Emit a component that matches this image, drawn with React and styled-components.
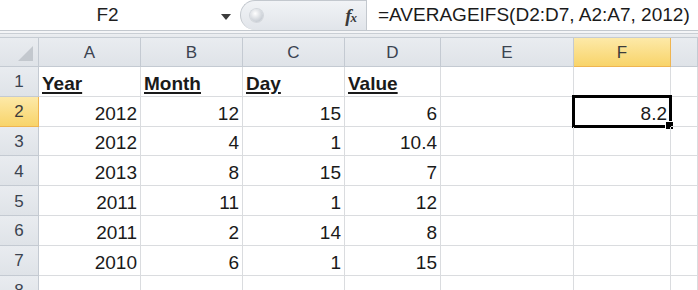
import React from 'react';
import styled, { createGlobalStyle, css } from 'styled-components';

const GlobalStyle = createGlobalStyle`
  html, body {
    margin: 0;
    padding: 0;
    background: #ffffff;
    overflow: hidden;
  }
  body {
    font-family: 'Liberation Sans', Arial, sans-serif;
  }
`;

const Sheet = styled.div`
  width: 698px;
  height: 290px;
  overflow: hidden;
  background: #ffffff;
  color: #1a1a1a;
`;

// Formula bar: name box, grip/fx control, formula input
const FormulaBar = styled.div`
  display: flex;
  height: 30px;
  background: #ffffff;
  border-bottom: 1px solid #c3c8ce;
`;

const NameBox = styled.div`
  position: relative;
  width: 240px;
  display: flex;
  align-items: center;
  font-size: 19px;
  color: #1f1f1f;
`;

const NameText = styled.span`
  width: 215px;
  text-align: center;
`;

const DropArrow = styled.span`
  width: 0;
  height: 0;
  margin-left: 6px;
  margin-top: 3px;
  border-left: 5px solid transparent;
  border-right: 5px solid transparent;
  border-top: 6px solid #3c3c3c;
`;

const FxArea = styled.div`
  width: 126px;
  display: flex;
  align-items: center;
  justify-content: space-between;
  padding: 0 10px 0 9px;
  box-sizing: border-box;
  background: linear-gradient(#f1f3f6, #e1e5ea);
  border: 1px solid #c3c8ce;
  border-right: none;
  border-bottom: none;
  border-radius: 16px 0 0 16px;
`;

const Grip = styled.span`
  width: 13px;
  height: 13px;
  border-radius: 50%;
  background: radial-gradient(circle at 40% 35%, #ffffff, #c9ced5 70%, #b3b9c1);
  box-shadow: 0 0 0 1px #d3d7dc;
`;

const Fx = styled.span`
  font-family: 'Liberation Serif', 'Times New Roman', serif;
  font-style: italic;
  font-weight: bold;
  font-size: 19px;
  color: #3a3a3a;
  letter-spacing: -1px;

  small {
    font-size: 13px;
  }
`;

const FormulaInput = styled.div`
  flex: 1;
  display: flex;
  align-items: center;
  padding-left: 11px;
  border-left: 1px solid #c3c8ce;
  font-size: 19px;
  color: #1a1a1a;
  white-space: nowrap;
`;

const Strip = styled.div`
  height: 6px;
  background: linear-gradient(
    #f4f5f7 0px,
    #f4f5f7 2px,
    #c9ced4 2px,
    #c9ced4 3px,
    #eceef1 3px,
    #e6e9ed 6px
  );
`;

// Grid
const Grid = styled.div`
  display: grid;
  grid-template-columns: 39px 102px 102px 102px 96px 133px 97px 1fr;
  grid-template-rows: 29px repeat(8, 29.8px);
  border-top: 1px solid #c6ccd3;
`;

const headerBase = css`
  display: flex;
  align-items: center;
  justify-content: center;
  box-sizing: border-box;
  font-size: 17px;
  color: #3b4350;
  background: linear-gradient(#e9ecf0, #dfe3e8);
  border-right: 1px solid #c4cad2;
  border-bottom: 1px solid #c4cad2;
  ${(p) =>
    p.$active &&
    css`
      background: linear-gradient(#fde9a8, #f8d46a);
      border-right-color: #efb551;
      border-bottom-color: #efb551;
      color: #3b3b3b;
    `}
`;

const Corner = styled.div`
  ${headerBase};
  position: relative;
`;

const CornerTriangle = styled.span`
  position: absolute;
  right: 5px;
  bottom: 5px;
  width: 0;
  height: 0;
  border-left: 15px solid transparent;
  border-bottom: 15px solid #c3c8ce;
`;

const ColHeader = styled.div`
  ${headerBase};
  padding-top: 2px;
`;

const RowHeader = styled.div`
  ${headerBase};
  padding-top: 2px;
`;

const Cell = styled.div`
  position: relative;
  display: flex;
  align-items: flex-end;
  justify-content: ${(p) => (p.$head ? 'flex-start' : 'flex-end')};
  box-sizing: border-box;
  padding: 0 3px 3px 3px;
  font-size: 19px;
  line-height: 1;
  color: #1a1a1a;
  border-right: 1px solid #dadcdf;
  border-bottom: 1px solid #dadcdf;
  white-space: nowrap;
  ${(p) =>
    p.$head &&
    css`
      font-weight: bold;
      text-decoration: underline;
      text-decoration-thickness: 2px;
      text-underline-offset: 2px;
    `}
`;

const Selection = styled.div`
  position: absolute;
  left: -2px;
  top: -2px;
  right: -2px;
  bottom: -2px;
  border: 3px solid #000000;
  pointer-events: none;
`;

const FillHandle = styled.span`
  position: absolute;
  right: -5px;
  bottom: -5px;
  width: 7px;
  height: 7px;
  background: #000000;
  border: 1px solid #ffffff;
`;

const columns = ['A', 'B', 'C', 'D', 'E', 'F', 'G'];

const rows = [
  ['Year', 'Month', 'Day', 'Value', '', '', ''],
  ['2012', '12', '15', '6', '', '8.2', ''],
  ['2012', '4', '1', '10.4', '', '', ''],
  ['2013', '8', '15', '7', '', '', ''],
  ['2011', '11', '1', '12', '', '', ''],
  ['2011', '2', '14', '8', '', '', ''],
  ['2010', '6', '1', '15', '', '', ''],
  ['', '', '', '', '', '', ''],
];

function App() {
  return (
    <Sheet>
      <GlobalStyle />
      <FormulaBar>
        <NameBox>
          <NameText>F2</NameText>
          <DropArrow />
        </NameBox>
        <FxArea>
          <Grip />
          <Fx>
            f<small>x</small>
          </Fx>
        </FxArea>
        <FormulaInput>=AVERAGEIFS(D2:D7, A2:A7, 2012)</FormulaInput>
      </FormulaBar>
      <Strip />
      <Grid>
        <Corner>
          <CornerTriangle />
        </Corner>
        {columns.map((c) => (
          <ColHeader key={c} $active={c === 'F'}>
            {c === 'G' ? '' : c}
          </ColHeader>
        ))}
        {rows.map((row, r) => (
          <React.Fragment key={r}>
            <RowHeader $active={r === 1}>{r + 1}</RowHeader>
            {row.map((val, c) => (
              <Cell key={c} $head={r === 0}>
                {val}
                {r === 1 && c === 5 && (
                  <Selection>
                    <FillHandle />
                  </Selection>
                )}
              </Cell>
            ))}
          </React.Fragment>
        ))}
      </Grid>
    </Sheet>
  );
}

export default App;
